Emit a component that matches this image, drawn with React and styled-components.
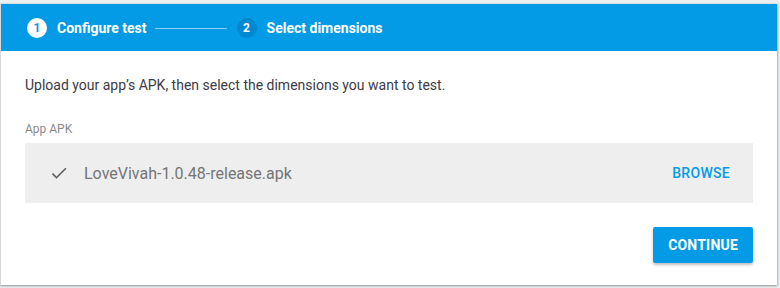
import React from "react";
import styled, { createGlobalStyle } from "styled-components";

const Global = createGlobalStyle`
  html, body { margin: 0; padding: 0; background: #eceff1; }
  body { font-family: Roboto, "Noto Sans", Arial, sans-serif; }
`;

const Page = styled.div`
  padding: 4px 3px 2px 0;
  height: 288px;
  box-sizing: border-box;
`;

const Card = styled.div`
  background: #fff;
  border-left: 1px solid #d6d9dc;
  box-shadow: 0 1px 2px rgba(0,0,0,0.35), 1px 0 2px rgba(0,0,0,0.15);
  height: 281px;
  width: 777px;
  box-sizing: border-box;
  display: flex;
  flex-direction: column;
`;

const Header = styled.div`
  height: 47px;
  background: #039be5;
  display: flex;
  align-items: center;
  padding-left: 26px;
  color: #fff;
`;

const Step = styled.div`
  display: flex;
  align-items: center;
  gap: 10px;
`;

const Circle = styled.span`
  width: 20px;
  height: 20px;
  border-radius: 50%;
  display: inline-flex;
  align-items: center;
  justify-content: center;
  font-size: 12px;
  font-weight: 700;
  background: ${p => (p.$active ? "#fff" : "#0288d1")};
  color: ${p => (p.$active ? "#039be5" : "#fff")};
`;

const StepLabel = styled.span`
  font-size: 14px;
  font-weight: 700;
  color: #fff;
`;

const Connector = styled.span`
  width: 72px;
  height: 1px;
  background: rgba(255,255,255,0.55);
  margin: 1px 10px 0 8px;
`;

const Body = styled.div`
  flex: 1;
  padding: 24px 24px 0 24px;
  display: flex;
  flex-direction: column;
`;

const Intro = styled.p`
  margin: 0;
  font-size: 14px;
  color: #3c3a45;
  line-height: 20px;
`;

const FieldLabel = styled.div`
  margin-top: 26px;
  font-size: 12px;
  color: #8a8a8a;
  line-height: 16px;
`;

const FileBox = styled.div`
  margin-top: 6px;
  height: 60px;
  background: #eeeeee;
  display: flex;
  align-items: center;
  padding: 0 23px 0 24px;
`;

const FileName = styled.span`
  margin-left: 15px;
  font-size: 16px;
  color: #757575;
  flex: 1;
`;

const Browse = styled.button`
  border: 0;
  background: transparent;
  font-family: inherit;
  font-size: 14px;
  font-weight: 500;
  color: #039be5;
  letter-spacing: 0.3px;
  padding: 0;
  cursor: pointer;
`;

const Actions = styled.div`
  display: flex;
  justify-content: flex-end;
  margin-top: 24px;
`;

const Primary = styled.button`
  height: 36px;
  padding: 0 15px;
  border: 0;
  border-radius: 2px;
  background: #039be5;
  color: #fff;
  font-family: inherit;
  font-size: 14px;
  font-weight: 700;
  letter-spacing: 0.2px;
  box-shadow: 0 2px 3px rgba(0,0,0,0.25);
  cursor: pointer;
`;

const Check = () => (
  <svg width="20" height="20" viewBox="0 0 24 24">
    <path d="M9 16.17L4.83 12l-1.42 1.41L9 19 21 7l-1.41-1.41z" fill="#616161" />
  </svg>
);

export default function App() {
  return (
    <>
      <Global />
      <Page>
        <Card>
          <Header>
            <Step>
              <Circle $active>1</Circle>
              <StepLabel>Configure test</StepLabel>
            </Step>
            <Connector />
            <Step>
              <Circle>2</Circle>
              <StepLabel>Select dimensions</StepLabel>
            </Step>
          </Header>
          <Body>
            <Intro>Upload your app’s APK, then select the dimensions you want to test.</Intro>
            <FieldLabel>App APK</FieldLabel>
            <FileBox>
              <Check />
              <FileName>LoveVivah-1.0.48-release.apk</FileName>
              <Browse>BROWSE</Browse>
            </FileBox>
            <Actions>
              <Primary>CONTINUE</Primary>
            </Actions>
          </Body>
        </Card>
      </Page>
    </>
  );
}
